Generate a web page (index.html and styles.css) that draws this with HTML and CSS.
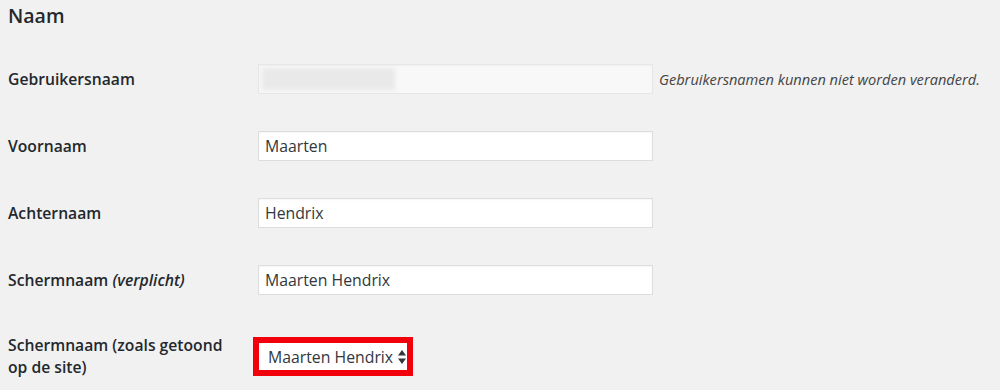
FILE: index.html
```html
<!DOCTYPE html>
<html lang="nl">

<head>
    <meta charset="UTF-8">
    <meta name="viewport" content="width=device-width, initial-scale=1.0">
    <title>Profiel</title>
    <link rel="stylesheet" href="styles.css">
</head>

<body>

    <h2 class="section-title">Naam</h2>

    <div class="form-table">

        <div class="form-row">
            <label class="form-label" for="user_login">Gebruikersnaam</label>
            <div class="form-field">
                <span class="field-wrap">
                    <input type="text" id="user_login" class="regular-text readonly" value="" disabled>
                    <span class="blurred"></span>
                </span>
                <span class="description">Gebruikersnamen kunnen niet worden veranderd.</span>
            </div>
        </div>

        <div class="form-row">
            <label class="form-label" for="first_name">Voornaam</label>
            <div class="form-field">
                <input type="text" id="first_name" class="regular-text" value="Maarten">
            </div>
        </div>

        <div class="form-row">
            <label class="form-label" for="last_name">Achternaam</label>
            <div class="form-field">
                <input type="text" id="last_name" class="regular-text" value="Hendrix">
            </div>
        </div>

        <div class="form-row">
            <label class="form-label" for="nickname">Schermnaam <em>(verplicht)</em></label>
            <div class="form-field">
                <input type="text" id="nickname" class="regular-text" value="Maarten Hendrix">
            </div>
        </div>

        <div class="form-row top">
            <label class="form-label multi" for="display_name">Schermnaam (zoals getoond op de site)</label>
            <div class="form-field">
                <div class="select highlight" id="display_name">
                    <span class="select-text">Maarten Hendrix</span>
                    <svg class="select-arrows" width="8" height="14" viewBox="0 0 8 14">
                        <path d="M4 0 L8 5.5 L0 5.5 Z" fill="#32373c" />
                        <path d="M4 14 L8 8.5 L0 8.5 Z" fill="#32373c" />
                    </svg>
                </div>
            </div>
        </div>

    </div>

</body>

</html>
```

FILE: styles.css
```css
body {
    background: #f1f1f1;
    margin: 0;
    padding: 0 8px;
    font-family: "Open Sans", "Noto Sans", sans-serif;
    color: #23282d;
}

.section-title {
    font-size: 19.5px;
    font-weight: 600;
    line-height: 28px;
    margin: 2px 0 16px 0;
}

.form-row {
    display: flex;
    align-items: center;
    padding: 18px 0 19px 0;
}

.form-row.top {
    align-items: flex-start;
}

.form-label {
    width: 250px;
    flex-shrink: 0;
    font-size: 15.7px;
    font-weight: 600;
    line-height: 22px;
}

.form-label em {
    font-style: italic;
}

.form-label.multi {
    width: 226px;
    margin-right: 25px;
    margin-top: 2px;
}

.form-field {
    display: flex;
    align-items: center;
}

.field-wrap {
    position: relative;
    display: block;
}

.regular-text {
    box-sizing: border-box;
    width: 395px;
    height: 30px;
    margin: 0;
    padding: 0 6px;
    border: 1px solid #ddd;
    background: #fff;
    font-family: "Open Sans", "Noto Sans", sans-serif;
    font-size: 15.8px;
    color: #32373c;
    box-shadow: inset 0 1px 2px rgba(0, 0, 0, 0.04);
    outline: none;
    display: block;
}

.regular-text.readonly {
    background: #f8f8f8;
    border-color: #e6e6e6;
}

.blurred {
    position: absolute;
    left: 4px;
    top: 4px;
    width: 133px;
    height: 22px;
    background: #e9e9e9;
    filter: blur(2px);
}

.description {
    margin-left: 6px;
    font-size: 14.6px;
    font-style: italic;
    color: #444;
}

.select {
    box-sizing: border-box;
    width: 148px;
    height: 27px;
    margin-top: 11px;
    padding: 0 0 0 9px;
    background: #fff;
    display: flex;
    align-items: center;
    gap: 5px;
    font-size: 15.8px;
    color: #32373c;
    white-space: nowrap;
}

.select.highlight {
    outline: 6px solid #f2000c;
}

.select-arrows {
    display: block;
    flex-shrink: 0;
}
```
